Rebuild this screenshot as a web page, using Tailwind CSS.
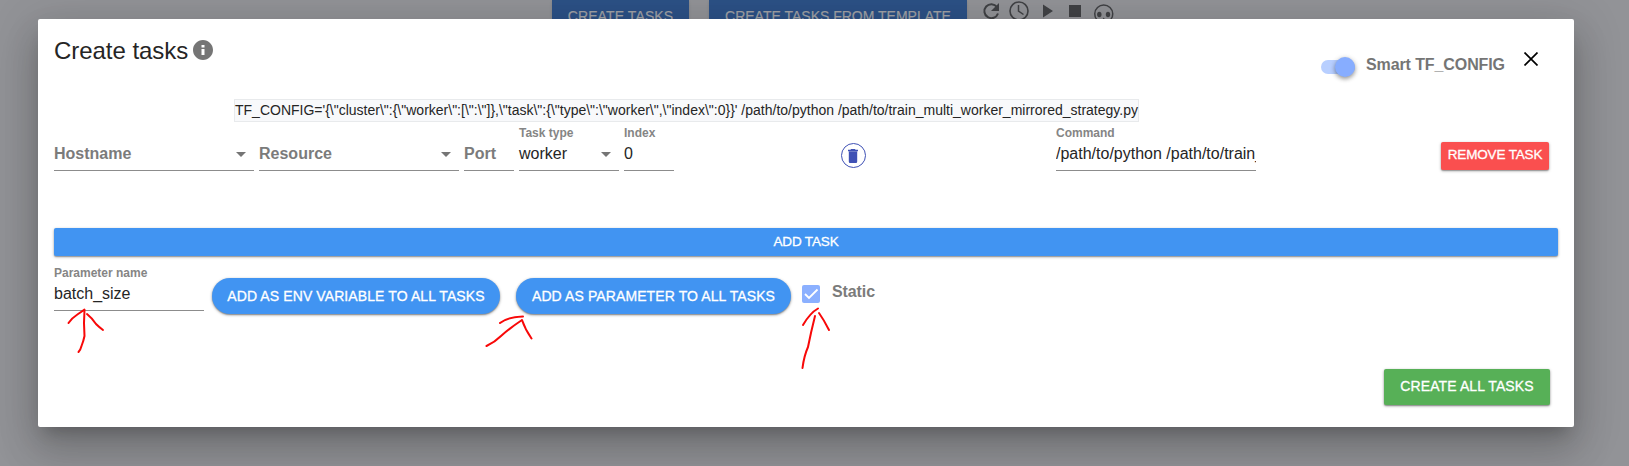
<!DOCTYPE html>
<html lang="en">
<head>
<meta charset="utf-8">
<title>Create tasks</title>
<script src="https://cdn.jsdelivr.net/npm/@tailwindcss/browser@4"></script>
</head>
<body class="relative h-[466px] overflow-hidden bg-[#929397] font-['Liberation_Sans',Arial,sans-serif] text-[#252525]">
<div class="flex h-[32px] pl-[552px] text-sm text-[#a1a3a7]">
  <div class="h-8 w-[137px] bg-[#2c5186] pt-[6px] text-center leading-5 tracking-[0.1px] shadow [-webkit-text-stroke:0.2px]">CREATE TASKS</div>
  <div class="ml-5 h-8 w-[258px] bg-[#2c5186] pt-[6px] text-center leading-5 shadow [-webkit-text-stroke:0.2px]">CREATE TASKS FROM TEMPLATE</div>
  <svg class="ml-[14px]" width="140" height="28" viewBox="981 0 140 28" fill="none" stroke="#414245">
    <path d="M997 7A7 7 0 1 0 998 13.500" stroke-width="2"/>
    <path d="M999 3v8h-8z" fill="#414245" stroke="none"/>
    <circle cx="1019" cy="11" r="9" stroke-width="1.600"/>
    <path d="M1018.500 5v6l5 3.500" stroke-width="1.500"/>
    <path d="M1043 4.500v13l10-6.500zM1069 5h12v12h-12z" fill="#414245" stroke="none"/>
    <path d="M1097 20A9 9 0 1 1 1110.500 20" stroke-width="1.500"/>
    <g fill="#414245" stroke="none"><ellipse cx="1099.300" cy="14.500" rx="2.200" ry="2.700"/><ellipse cx="1108" cy="14.500" rx="2.200" ry="2.700"/><path d="M1102 20l1.700-2.500 1.700 2.500z"/></g>
  </svg>
</div>

<main class="absolute left-[38px] top-[19px] flex h-[408px] w-[1536px] flex-col rounded-[2px] bg-white px-4 shadow-[0_11px_15px_-7px_rgba(0,0,0,0.2),0_24px_38px_3px_rgba(0,0,0,0.14),0_9px_46px_8px_rgba(0,0,0,0.12)]">
  <header class="flex h-[80px] items-start">
    <h1 class="mt-4 text-2xl leading-8 tracking-[-0.04px]">Create tasks</h1>
    <svg class="ml-[5px] mt-[21px]" width="20" height="20" viewBox="2 2 20 20" fill="#757575"><path d="M12 2C6.480 2 2 6.480 2 12s4.480 10 10 10 10-4.480 10-10S17.520 2 12 2zm1.500 15h-3v-6h3v6zm0-7.500h-3V7h3v2.500z"/></svg>
    <div class="ml-auto mt-[41px] flex h-[14px] w-[34px] items-center justify-end rounded-full bg-[#b8cfff]"><span class="size-5 shrink-0 rounded-full bg-[#87adff] shadow-[0_2px_4px_rgba(0,0,0,0.35),0_1px_6px_rgba(0,0,0,0.12)]"></span></div>
    <span class="ml-[11px] mt-[34px] w-[138px] whitespace-nowrap text-base font-bold leading-6 tracking-[-0.1px] text-[#757575]">Smart TF_CONFIG</span>
    <svg class="ml-5 mr-5 mt-[33px]" width="14" height="14" viewBox="0 0 14 14" stroke="#000" stroke-width="1.700"><path d="M.5.500l13 13M13.500.500l-13 13"/></svg>
  </header>
  <code class="ml-[180px] h-[23px] w-[905px] whitespace-nowrap border border-[#e8eaec] bg-[#f8f9fb] text-sm leading-[21px] font-['Liberation_Sans',Arial,sans-serif]">TF_CONFIG='{\"cluster\":{\"worker\":[\":\"]},\"task\":{\"type\":\"worker\",\"index\":0}}' /path/to/python /path/to/train_multi_worker_mirrored_strategy.py</code>
  <section class="mt-[1px] flex h-[106px] items-start text-base leading-5">
    <div class="flex h-[48px] w-[200px] items-start justify-between border-b border-[#8c8c8c] pt-[21px]"><span class="font-bold text-[#7b7b7b]">Hostname</span><i class="mr-2 mt-[8px] border-x-[5px] border-t-[5px] border-x-transparent border-t-[#757575]"></i></div>
    <div class="ml-[5px] flex h-[48px] w-[200px] items-start justify-between border-b border-[#8c8c8c] pt-[21px]"><span class="font-bold text-[#7b7b7b]">Resource</span><i class="mr-2 mt-[8px] border-x-[5px] border-t-[5px] border-x-transparent border-t-[#757575]"></i></div>
    <div class="ml-[5px] h-[48px] w-[50px] border-b border-[#8c8c8c] pt-[21px] font-bold text-[#7b7b7b]">Port</div>
    <div class="ml-[5px] h-[48px] w-[100px] border-b border-[#8c8c8c] pt-px"><div class="h-[20px] text-xs font-bold leading-[18px] text-[#858585]">Task type</div><div class="flex items-start justify-between"><span>worker</span><i class="mr-2 mt-[8px] border-x-[5px] border-t-[5px] border-x-transparent border-t-[#757575]"></i></div></div>
    <div class="ml-[5px] h-[48px] w-[50px] border-b border-[#8c8c8c] pt-px"><div class="h-[20px] text-xs font-bold leading-[18px] text-[#858585]">Index</div>0</div>
    <div class="ml-[167px] mt-[20px] flex size-[25px] items-center justify-center rounded-full border border-[#3f51b5]"><svg class="-ml-px" width="10" height="14" viewBox="0 0 10 14" fill="#3f51b5"><path d="M.8 2.500h8.400V12.500Q9.200 14 8 14H2Q.8 14 .8 12.500zM0 .7H2.500L3 0h4l.5.700H10V2.200H0z"/></svg></div>
    <div class="ml-[190px] h-[48px] w-[200px] overflow-hidden whitespace-nowrap border-b border-[#8c8c8c] pt-px"><div class="h-[20px] text-xs font-bold leading-[18px] text-[#858585]">Command</div>/path/to/python /path/to/train_</div>
    <button class="ml-[185px] mt-[19px] h-7 w-[108px] whitespace-nowrap rounded-[2px] bg-[#fa4f4f] pb-0.5 text-[13.500px] leading-[26px] tracking-[-0.15px] text-white shadow-[0_1px_3px_rgba(0,0,0,0.35),0_1px_1px_rgba(0,0,0,0.2)] [-webkit-text-stroke:0.3px]">REMOVE TASK</button>
  </section>
  <button class="-mt-px h-7 shrink-0 rounded-[2px] bg-[#4194f2] pb-px text-[13.500px] leading-[27px] tracking-[-0.15px] text-white shadow-[0_1px_3px_rgba(0,0,0,0.35),0_1px_1px_rgba(0,0,0,0.2)] [-webkit-text-stroke:0.3px]">ADD TASK</button>
  <section class="flex h-[113px] shrink-0 items-start">
    <div class="mt-[6px] h-[49px] w-[150px] border-b border-[#8c8c8c] pt-[2px]"><div class="h-[20px] text-xs font-bold leading-[18px] text-[#858585]">Parameter name</div><div class="leading-5">batch_size</div></div>
    <button class="ml-2 mt-[22px] h-9 w-[288px] whitespace-nowrap rounded-full bg-[#4194f2] text-sm tracking-[0.1px] text-white shadow-[0_1px_3px_rgba(0,0,0,0.4),0_1px_1px_rgba(0,0,0,0.2)] [-webkit-text-stroke:0.3px]">ADD AS ENV VARIABLE TO ALL TASKS</button>
    <button class="ml-4 mt-[22px] h-9 w-[275px] whitespace-nowrap rounded-full bg-[#4194f2] text-sm tracking-[0.1px] text-white shadow-[0_1px_3px_rgba(0,0,0,0.4),0_1px_1px_rgba(0,0,0,0.2)] [-webkit-text-stroke:0.3px]">ADD AS PARAMETER TO ALL TASKS</button>
    <svg class="ml-[11px] mt-[29px]" width="18" height="18" viewBox="0 0 18 18"><rect width="18" height="18" rx="2" fill="#8bb0ff"/><path d="M3 9l4 4 8.500-8.500" fill="none" stroke="#fff" stroke-width="1.800"/></svg>
    <span class="ml-3 mt-[24px] font-bold leading-6 tracking-[-0.1px] text-[#7b7b7b]">Static</span>
  </section>
  <button class="ml-auto mr-2 h-9 w-[166px] shrink-0 whitespace-nowrap rounded-[2px] bg-[#57b057] pb-0.5 text-sm tracking-[0.1px] text-white shadow-[0_1px_3px_rgba(0,0,0,0.4),0_1px_1px_rgba(0,0,0,0.2)] [-webkit-text-stroke:0.3px]">CREATE ALL TASKS</button>
</main>
<svg class="pointer-events-none absolute left-0 top-0" width="1629" height="466" fill="none" stroke="#f80808" stroke-width="2" stroke-linecap="round" stroke-linejoin="round">
  <path d="M68.500 323C73 316 76 316 84.500 309.500M84.500 310q-1 13 0 26-1 5-3 10-1 4-3 6M87 314q5 4 9 10 3 3 7 6"/>
  <path d="M486.500 346Q495 342 501 336 510 328 522 320M500 323Q507 317 523 316.500M522 320Q525 329 531.500 338.500"/>
  <path d="M802.500 368Q804 356 808 347 811 332 815 316M803 325Q810 313 818 308.500M819 313Q824 320 829 330"/>
</svg>
</body>
</html>
